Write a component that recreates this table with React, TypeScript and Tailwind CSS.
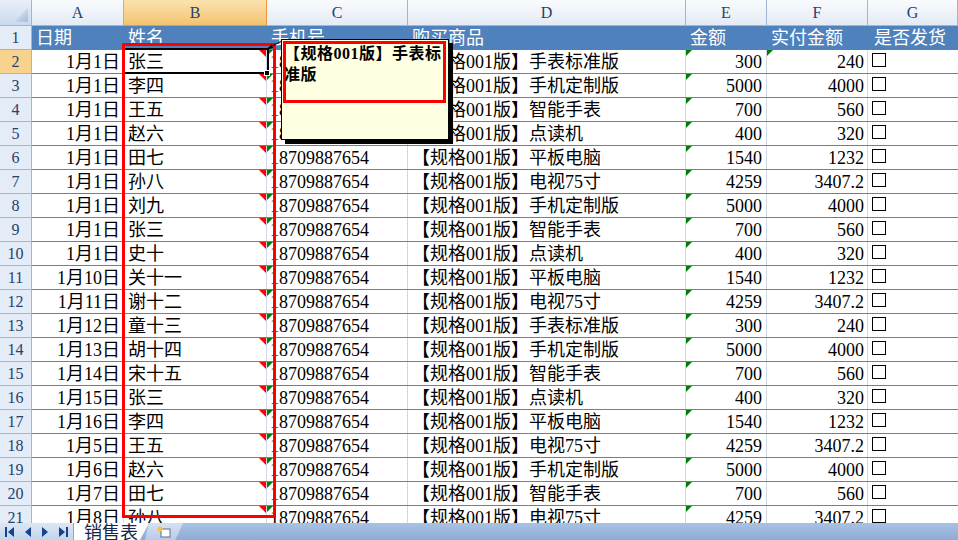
import React from "react";

interface Row {
  date: string;
  name: string;
  product: string;
  amount: string;
  paid: string;
}

const rows: Row[] = [
  { date: "1月1日", name: "张三", product: "手表标准版", amount: "300", paid: "240" },
  { date: "1月1日", name: "李四", product: "手机定制版", amount: "5000", paid: "4000" },
  { date: "1月1日", name: "王五", product: "智能手表", amount: "700", paid: "560" },
  { date: "1月1日", name: "赵六", product: "点读机", amount: "400", paid: "320" },
  { date: "1月1日", name: "田七", product: "平板电脑", amount: "1540", paid: "1232" },
  { date: "1月1日", name: "孙八", product: "电视75寸", amount: "4259", paid: "3407.2" },
  { date: "1月1日", name: "刘九", product: "手机定制版", amount: "5000", paid: "4000" },
  { date: "1月1日", name: "张三", product: "智能手表", amount: "700", paid: "560" },
  { date: "1月1日", name: "史十", product: "点读机", amount: "400", paid: "320" },
  { date: "1月10日", name: "关十一", product: "平板电脑", amount: "1540", paid: "1232" },
  { date: "1月11日", name: "谢十二", product: "电视75寸", amount: "4259", paid: "3407.2" },
  { date: "1月12日", name: "童十三", product: "手表标准版", amount: "300", paid: "240" },
  { date: "1月13日", name: "胡十四", product: "手机定制版", amount: "5000", paid: "4000" },
  { date: "1月14日", name: "宋十五", product: "智能手表", amount: "700", paid: "560" },
  { date: "1月15日", name: "张三", product: "点读机", amount: "400", paid: "320" },
  { date: "1月16日", name: "李四", product: "平板电脑", amount: "1540", paid: "1232" },
  { date: "1月5日", name: "王五", product: "电视75寸", amount: "4259", paid: "3407.2" },
  { date: "1月6日", name: "赵六", product: "手机定制版", amount: "5000", paid: "4000" },
  { date: "1月7日", name: "田七", product: "智能手表", amount: "700", paid: "560" },
  { date: "1月8日", name: "孙八", product: "电视75寸", amount: "4259", paid: "3407.2" },
];

const letters = [
  { l: "A", w: "w-[92px]" },
  { l: "B", w: "w-[143px]" },
  { l: "C", w: "w-[141px]" },
  { l: "D", w: "w-[278px]" },
  { l: "E", w: "w-[81px]" },
  { l: "F", w: "w-[101px]" },
  { l: "G", w: "w-[90px]" },
];

const greenTri = "absolute left-0 top-0 w-[6px] h-[6px] bg-[#008000] [clip-path:polygon(0_0,100%_0,0_100%)]";
const redTri = "absolute right-0 top-0 w-[7px] h-[7px] bg-[#ff0000] [clip-path:polygon(0_0,100%_0,100%_100%)]";

function RowHead({ n, active }: { n: number; active?: boolean }) {
  return (
    <div
      className={`w-[32px] shrink-0 h-full flex items-center justify-center border-r border-b border-[#9eb6ce] text-[16px] text-[#27416c] ${
        active ? "bg-[#f8d38d]" : "bg-[#e4ecf7]"
      }`}
    >
      {n}
    </div>
  );
}

export default function App() {
  return (
    <div className="w-[958px] h-[540px] flex flex-col bg-white overflow-hidden font-['Liberation_Serif','Noto_Sans_CJK_SC',serif] text-black">
      <div className="relative flex-1 overflow-hidden">
        {/* column letters */}
        <div className="flex h-[26px]">
          <div className="w-[32px] shrink-0 h-full relative border-r border-b border-[#9eb6ce] bg-gradient-to-b from-[#e9eff8] to-[#c9d9ee]">
            <div className="absolute right-[3px] bottom-[3px] w-[14px] h-[14px] bg-gradient-to-br from-[#e8eef6] to-[#a6bcd8] [clip-path:polygon(100%_0,100%_100%,0_100%)]" />
          </div>
          {letters.map((c) => (
            <div
              key={c.l}
              className={`${c.w} shrink-0 h-full flex items-center justify-center border-r border-b text-[16px] ${
                c.l === "B"
                  ? "bg-gradient-to-b from-[#fbe2ae] to-[#f3c46f] border-[#f29536] text-[#27416c]"
                  : "bg-gradient-to-b from-[#f9fbfd] to-[#e4ebf5] border-[#9eb6ce] text-[#27416c]"
              }`}
            >
              {c.l}
            </div>
          ))}
        </div>

        {/* header row */}
        <div className="flex h-[24px]">
          <RowHead n={1} />
          <div className="flex flex-1 bg-[#4f81bd] text-white text-[18px] leading-[25px] border-b border-[#4f81bd]">
            <div className="w-[92px] shrink-0 pl-[4px]">日期</div>
            <div className="w-[143px] shrink-0 pl-[4px]">姓名</div>
            <div className="w-[141px] shrink-0 pl-[4px]">手机号</div>
            <div className="w-[278px] shrink-0 pl-[4px]">购买商品</div>
            <div className="w-[81px] shrink-0 pl-[4px]">金额</div>
            <div className="w-[101px] shrink-0 pl-[4px]">实付金额</div>
            <div className="w-[90px] shrink-0 pl-[6px] whitespace-nowrap">是否发货</div>
          </div>
        </div>

        {/* data rows */}
        {rows.map((r, i) => (
          <div key={i} className="flex h-[24px]">
            <RowHead n={i + 2} active={i === 0} />
            <div className="flex flex-1 text-[18px] leading-[25px] border-b border-[#5a82bd]">
              <div className="w-[92px] shrink-0 text-right pr-[3px] border-r border-[#d0d7e5]">{r.date}</div>
              <div className="w-[143px] shrink-0 relative pl-[4px] border-r border-[#d0d7e5]">
                {r.name}
                <div className={redTri} />
              </div>
              <div className="w-[141px] shrink-0 relative pl-[3px] border-r border-[#d0d7e5] whitespace-nowrap overflow-hidden">
                18709887654
                <div className={greenTri} />
              </div>
              <div className="w-[278px] shrink-0 pl-[4px] border-r border-[#d0d7e5] whitespace-nowrap">
                【规格001版】{r.product}
              </div>
              <div className="w-[81px] shrink-0 relative text-right pr-[4px] border-r border-[#d0d7e5]">
                {r.amount}
                <div className={greenTri} />
              </div>
              <div className="w-[101px] shrink-0 relative text-right pr-[3px] border-r border-[#d0d7e5]">
                {r.paid}
                {i === 0 && <div className={greenTri} />}
              </div>
              <div className="w-[90px] shrink-0 pl-[4px] pt-[3px]">
                <div className="w-[14px] h-[14px] border border-black" />
              </div>
            </div>
          </div>
        ))}

        {/* selected cell B2 */}
        <div className="absolute left-[123px] top-[48px] w-[146px] h-[26px] border-2 border-black" />
        <div className="absolute left-[264px] top-[70px] w-[6px] h-[6px] bg-black border border-white" />

        {/* red annotation box around name column */}
        <div className="absolute left-[122px] top-[43px] w-[154px] h-[475px] border-[3px] border-[#ff0000]" />

        {/* comment connector */}
        <svg className="absolute left-[264px] top-[38px]" width="20" height="14" viewBox="0 0 20 14">
          <line x1="4" y1="10" x2="18" y2="3" stroke="black" strokeWidth="1" />
          <polygon points="2,12 8,6 9,10" fill="black" />
        </svg>

        {/* comment box */}
        <div className="absolute left-[281px] top-[39px] w-[168px] h-[101px] bg-[#ffffe1] border border-black shadow-[4px_4px_0_0_#000]">
          <div className="absolute left-[1px] top-[1px] w-[163px] h-[62px] border-[3px] border-[#ff0000]" />
          <div className="relative pl-[2px] pt-[3px] text-[16px] leading-[21px] font-bold tracking-[0.5px]">
            【规格001版】手表标准版
          </div>
        </div>
      </div>

      {/* sheet tabs */}
      <div className="h-[17px] flex items-stretch bg-gradient-to-b from-[#a9c2e3] to-[#8eabd6]">
        <div className="w-[73px] flex items-center justify-around px-[1px] bg-gradient-to-b from-[#dbe6f4] to-[#c3d5ec]">
          <svg width="12" height="12" viewBox="0 0 12 12"><rect x="1" y="1" width="2" height="10" fill="#15428b" /><polygon points="10,1 4,6 10,11" fill="#15428b" /></svg>
          <svg width="12" height="12" viewBox="0 0 12 12"><polygon points="9,1 3,6 9,11" fill="#15428b" /></svg>
          <svg width="12" height="12" viewBox="0 0 12 12"><polygon points="3,1 9,6 3,11" fill="#15428b" /></svg>
          <svg width="12" height="12" viewBox="0 0 12 12"><polygon points="2,1 8,6 2,11" fill="#15428b" /><rect x="9" y="1" width="2" height="10" fill="#15428b" /></svg>
        </div>
        <div className="w-[76px] bg-white flex items-center pl-[10px] text-[18px] leading-[17px] text-[#15284b] font-['Noto_Sans_CJK_SC',sans-serif] [clip-path:polygon(0_0,100%_0,88%_100%,0_100%)] border-l border-[#8ea8cf]">
          销售表
        </div>
        <div className="w-[38px] -ml-[4px] flex items-center justify-center bg-gradient-to-b from-[#d6e2f2] to-[#b7cbe7] [clip-path:polygon(10%_0,100%_0,80%_100%,0_100%)]">
          <svg width="18" height="14" viewBox="0 0 18 14">
            <rect x="6" y="4" width="9" height="8" fill="#fff" stroke="#5a6f8f" strokeWidth="1" />
            <circle cx="5" cy="4" r="2.5" fill="#f6c343" />
          </svg>
        </div>
        <div className="flex-1" />
      </div>
    </div>
  );
}
